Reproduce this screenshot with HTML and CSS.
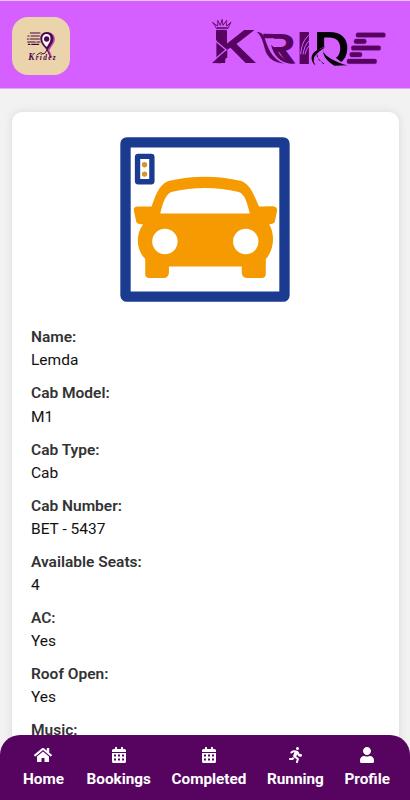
FILE: index.html
```html
<!DOCTYPE html>
<html lang="en">

<head>
  <meta charset="UTF-8" />
  <meta name="viewport" content="width=device-width, initial-scale=1.0" />
  <title>Kride</title>
  <link rel="stylesheet" href="styles.css">
</head>

<body>
  <header class="header">
    <div class="logo-box">
      <svg class="logo-icon" viewBox="0 0 90 90">
        <g stroke="#420543" stroke-width="3.5" stroke-linecap="round">
          <path d="M13 6H42M6 15H9M15 15H40M4 24H7M12 24H40M5 33H28M33 33H42M7 40H12M17 40H38" />
        </g>
        <path d="M66 5C87 5 91 24 83 37L70 58L80 81L66 65" fill="#b34fac" />
        <path d="M62 3C79 3 86 18 80 33C75 44 68 50 64 59C56 48 45 41 43 25C42 12 50 3 62 3Z" fill="#4d064f" />
        <path d="M62 9C71 9 76 18 73 28C71 36 66 42 62 48C56 42 50 35 49 26C48 16 53 9 62 9Z" fill="#fff" />
        <circle cx="62" cy="24" r="8" fill="#4d064f" />
        <path d="M32 73Q45 60 51 69Q58 69 63 56L75 81" fill="none" stroke="#4d064f" stroke-width="3" />
        <text class="logo-initial" x="7" y="86" textLength="27">K</text>
        <text class="logo-text" x="29" y="87" textLength="60">ridez</text>
      </svg>
    </div>

    <svg class="brand" viewBox="36 24 528 156">
      <!-- crown -->
      <path class="crown" d="M40 39L50 56H83L92 38L80 48L78 33L69 46L66 30L61 46L54 33L53 48ZM50 53H83" />
      <g class="crown-dots">
        <circle cx="38" cy="38" r="2" />
        <circle cx="53" cy="32" r="2" />
        <circle cx="66" cy="29" r="2" />
        <circle cx="80" cy="32" r="2" />
        <circle cx="92" cy="37" r="2" />
      </g>
      <!-- k -->
      <text class="letter" x="37" y="160" font-size="144" textLength="133" lengthAdjust="spacingAndGlyphs">K</text>
      <path d="M48 61H81V112L48 88Z" fill="#560460" />
      <path d="M46 92L78 119L36 155" fill="none" stroke="#d55fff" stroke-width="4" />
      <path d="M36 159L82 119V142L62 160Z" fill="#560460" />
      <!-- r -->
      <text class="letter" x="180" y="160" font-size="129" textLength="108" lengthAdjust="spacingAndGlyphs">R</text>
      <path d="M176 85H222V125L250 163H176Z" fill="#d55fff" />
      <path d="M170 65Q187 66 193 82C205 114 213 146 252 161Q215 158 201 133C190 113 192 84 170 65Z" fill="#560460" />
      <path d="M190 71L222 72V84H207Q199 83 190 71ZM213 104L231 120Q247 154 288 162Q251 164 232 142Q218 126 213 104Z" fill="#560460" />
      <!-- i -->
      <text class="letter" x="286" y="162" font-size="138" textLength="54" lengthAdjust="spacingAndGlyphs">I</text>
      <path d="M302 133C305 105 311 90 326 76M309 133C312 114 318 101 328 92M315 133Q318 116 329 106" fill="none" stroke="#d55fff" stroke-width="3" />
      <!-- d with road -->
      <text class="letter letter-dark" x="341" y="165" font-size="142" textLength="107" lengthAdjust="spacingAndGlyphs">D</text>
      <path d="M332 169C329 134 347 122 366 113L388 108Q383 125 407 143L441 169Z" fill="#d55fff" />
      <path d="M347 167C326 149 334 127 354 119Q366 115 376 112Q351 128 344 139Q337 151 347 167ZM371 114Q363 130 394 147Q421 162 443 166L403 167Q363 143 371 114Z" fill="#050005" />
      <path d="M358 121Q339 140 374 163" fill="none" stroke="#050005" stroke-width="2.5" stroke-dasharray="9 5" />
      <!-- e -->
      <g fill="#560460" stroke="#6b0878">
        <rect x="468" y="68" width="88" height="14" rx="5" />
        <rect x="462" y="87" width="37" height="14" rx="6" />
        <rect x="454" y="107" width="88" height="14" rx="5" />
        <rect x="449" y="127" width="37" height="14" rx="6" />
        <rect x="441" y="147" width="89" height="14" rx="5" />
      </g>
    </svg>
  </header>

  <main class="cab-card">
    <svg class="cab-img" viewBox="30 36 508 494">
      <rect x="46" y="52" width="476" height="462" rx="4" fill="#fff" stroke="#1b3b91" stroke-width="31" />
      <rect x="82" y="94" width="43" height="76" rx="2" fill="#fff" stroke="#1b3b91" stroke-width="16" />
      <circle cx="103" cy="119" r="8" fill="#d6942f" />
      <circle cx="103" cy="147" r="8" fill="#d6942f" />
      <path fill="#f59a00" fill-rule="evenodd" d="M124 244C136 212 145 180 174 168Q283 142 393 168C424 182 431 214 446 244L488 243Q501 245 500 256L493 290Q491 297 476 297C493 324 493 370 466 402V446Q466 458 453 458H411Q396 458 394 444V424H176V444Q174 458 160 458H117Q105 458 105 446V401C76 373 77 325 99 297Q80 299 78 289L71 256Q69 245 82 244ZM150 265H418C409 229 403 208 385 201Q284 177 183 201C165 210 158 233 150 265Z" />
      <circle cx="164" cy="349" r="38" fill="#fff" />
      <circle cx="406" cy="349" r="38" fill="#fff" />
    </svg>

    <div class="details">
      <div class="detail"><strong>Name:</strong><span>Lemda</span></div>
      <div class="detail"><strong>Cab Model:</strong><span>M1</span></div>
      <div class="detail"><strong>Cab Type:</strong><span>Cab</span></div>
      <div class="detail"><strong>Cab Number:</strong><span>BET - 5437</span></div>
      <div class="detail"><strong>Available Seats:</strong><span>4</span></div>
      <div class="detail"><strong>AC:</strong><span>Yes</span></div>
      <div class="detail"><strong>Roof Open:</strong><span>Yes</span></div>
      <div class="detail"><strong>Music:</strong></div>
    </div>
  </main>

  <nav class="bottom-nav">
    <a class="nav-item nav-home" href="#">
      <svg class="nav-icon" viewBox="0 0 576 512"><path d="M280 148L96 300v164q0 16 16 16h112q16 0 16-16v-96q0-16 16-16h64q16 0 16 16v96q0 16 16 16h112q16 0 16-16V300L296 148q-8-6-16 0zM572 251L488 182V44q0-12-12-12h-56q-12 0-12 12v72l-90-74q-30-25-61 0L4 251q-9 8-2 17l26 31q8 9 17 2L280 107q8-6 16 0l235 194q9 7 17-2l26-31q7-9-2-17z" /></svg>
      <span>Home</span>
    </a>
    <a class="nav-item" href="#">
      <svg class="nav-icon" viewBox="0 0 448 512"><path fill-rule="evenodd" d="M0 464q0 48 48 48h352q48 0 48-48V192H0zM64 240h64v64H64zM192 240h64v64h-64zM320 240h64v64h-64zM64 368h64v64H64zM192 368h64v64h-64zM320 368h64v64h-64zM400 64h-48V16q0-16-16-16h-32q-16 0-16 16v48H160V16q0-16-16-16h-32Q96 0 96 16v48H48Q0 64 0 112v48h448v-48q0-48-48-48z" /></svg>
      <span>Bookings</span>
    </a>
    <a class="nav-item" href="#">
      <svg class="nav-icon" viewBox="0 0 448 512"><path fill-rule="evenodd" d="M0 464q0 48 48 48h352q48 0 48-48V192H0zM64 240h64v64H64zM192 240h64v64h-64zM320 240h64v64h-64zM64 368h64v64H64zM192 368h64v64h-64zM320 368h64v64h-64zM400 64h-48V16q0-16-16-16h-32q-16 0-16 16v48H160V16q0-16-16-16h-32Q96 0 96 16v48H48Q0 64 0 112v48h448v-48q0-48-48-48z" /></svg>
      <span>Completed</span>
    </a>
    <a class="nav-item" href="#">
      <svg class="nav-icon" viewBox="0 0 416 512"><path d="M272 96c27 0 48-21 48-48S299 0 272 0s-48 21-48 48 21 48 48 48zM114 317l-17 35H32c-42 0-42 64 0 64h75c25 0 47-14 58-37l9-20-11-6c-22-13-39-33-49-36zM384 224h-44l-26-53c-12-25-35-43-62-50l-71-18c-29-6-60 0-84 18l-40 31c-33 26 5 77 39 51l40-31c8-6 18-8 26-6l15 4-38 89c-13 29-2 63 26 80l85 51-28 88c-13 40 48 59 61 19l31-97c6-21-3-43-21-54l-61-37 31-78 20 41c11 22 33 36 57 36h44c42 0 42-84 0-84z" /></svg>
      <span>Running</span>
    </a>
    <a class="nav-item" href="#">
      <svg class="nav-icon" viewBox="0 0 448 512"><path d="M224 256c71 0 128-57 128-128S295 0 224 0 96 57 96 128s57 128 128 128zm90 32h-17q-73 33-146 0h-17C60 288 0 348 0 422v42q0 48 48 48h352q48 0 48-48v-42c0-74-60-134-134-134z" /></svg>
      <span>Profile</span>
    </a>
  </nav>
</body>

</html>
```
FILE: styles.css
```css
* {
  margin: 0;
  padding: 0;
  box-sizing: border-box;
}

body {
  display: flex;
  flex-direction: column;
  height: 100vh;
  overflow: hidden;
  background-color: #f2f2f2;
  font-family: Roboto, sans-serif;
}

/* Header */
.header {
  display: flex;
  flex-shrink: 0;
  justify-content: space-between;
  align-items: center;
  height: 89px;
  padding: 3px 22px 0 12px;
  background-color: #d55fff;
  border-top: 1px solid #ecc8f7;
  border-bottom: 1px solid #e2a5f7;
}

.logo-box {
  display: flex;
  justify-content: center;
  align-items: center;
  width: 58px;
  height: 58px;
  border-radius: 16px;
  background-color: #ebd3ab;
}

.logo-icon {
  width: 30px;
  height: 30px;
  overflow: visible;
}

.logo-initial,
.logo-text {
  font-family: 'Liberation Serif', serif;
  font-style: italic;
  font-weight: bold;
  font-size: 28px;
  fill: #4d064f;
}

.logo-text {
  font-size: 22px;
}

.brand {
  width: 176px;
  height: 52px;
  margin-bottom: 4px;
  overflow: visible;
}

.crown {
  fill: none;
  stroke: #65106f;
  stroke-width: 3;
}

.crown-dots {
  fill: #65106f;
}

.letter {
  font-family: 'Liberation Sans', sans-serif;
  font-weight: bold;
  fill: #560460;
}

.letter-dark {
  fill: #050005;
}

/* Cab details */
.cab-card {
  display: flex;
  flex: 1;
  flex-direction: column;
  width: 387px;
  min-height: 0;
  margin: 23px 0 0 12px;
  padding: 25px 19px 0;
  background-color: #fff;
  border-radius: 10px 10px 0 0;
  box-shadow: 0 0 10px rgba(0, 0, 0, 0.1);
}

.cab-img {
  flex-shrink: 0;
  width: 170px;
  height: 165px;
  margin-left: 89px;
}

.details {
  margin-top: 24.4px;
}

.detail {
  display: flex;
  flex-direction: column;
  margin-bottom: 10px;
  font-size: 15.5px;
  line-height: 23.05px;
  color: #111;
}

.detail strong {
  font-weight: 600;
  color: #333;
}

/* Bottom navigation */
.bottom-nav {
  position: fixed;
  left: 0;
  right: 0;
  bottom: 0;
  display: flex;
  justify-content: space-between;
  height: 65px;
  padding: 12px 20px 0 23px;
  background-color: #560460;
  border-radius: 20px 20px 0 0;
}

.nav-item {
  display: flex;
  flex-direction: column;
  align-items: center;
  gap: 7px;
  color: #fff;
  font-size: 15.3px;
  font-weight: bold;
  line-height: 18px;
  text-decoration: none;
}

.nav-home {
  margin-right: 2px;
}

.nav-icon {
  height: 16px;
  fill: #fff;
}
```
